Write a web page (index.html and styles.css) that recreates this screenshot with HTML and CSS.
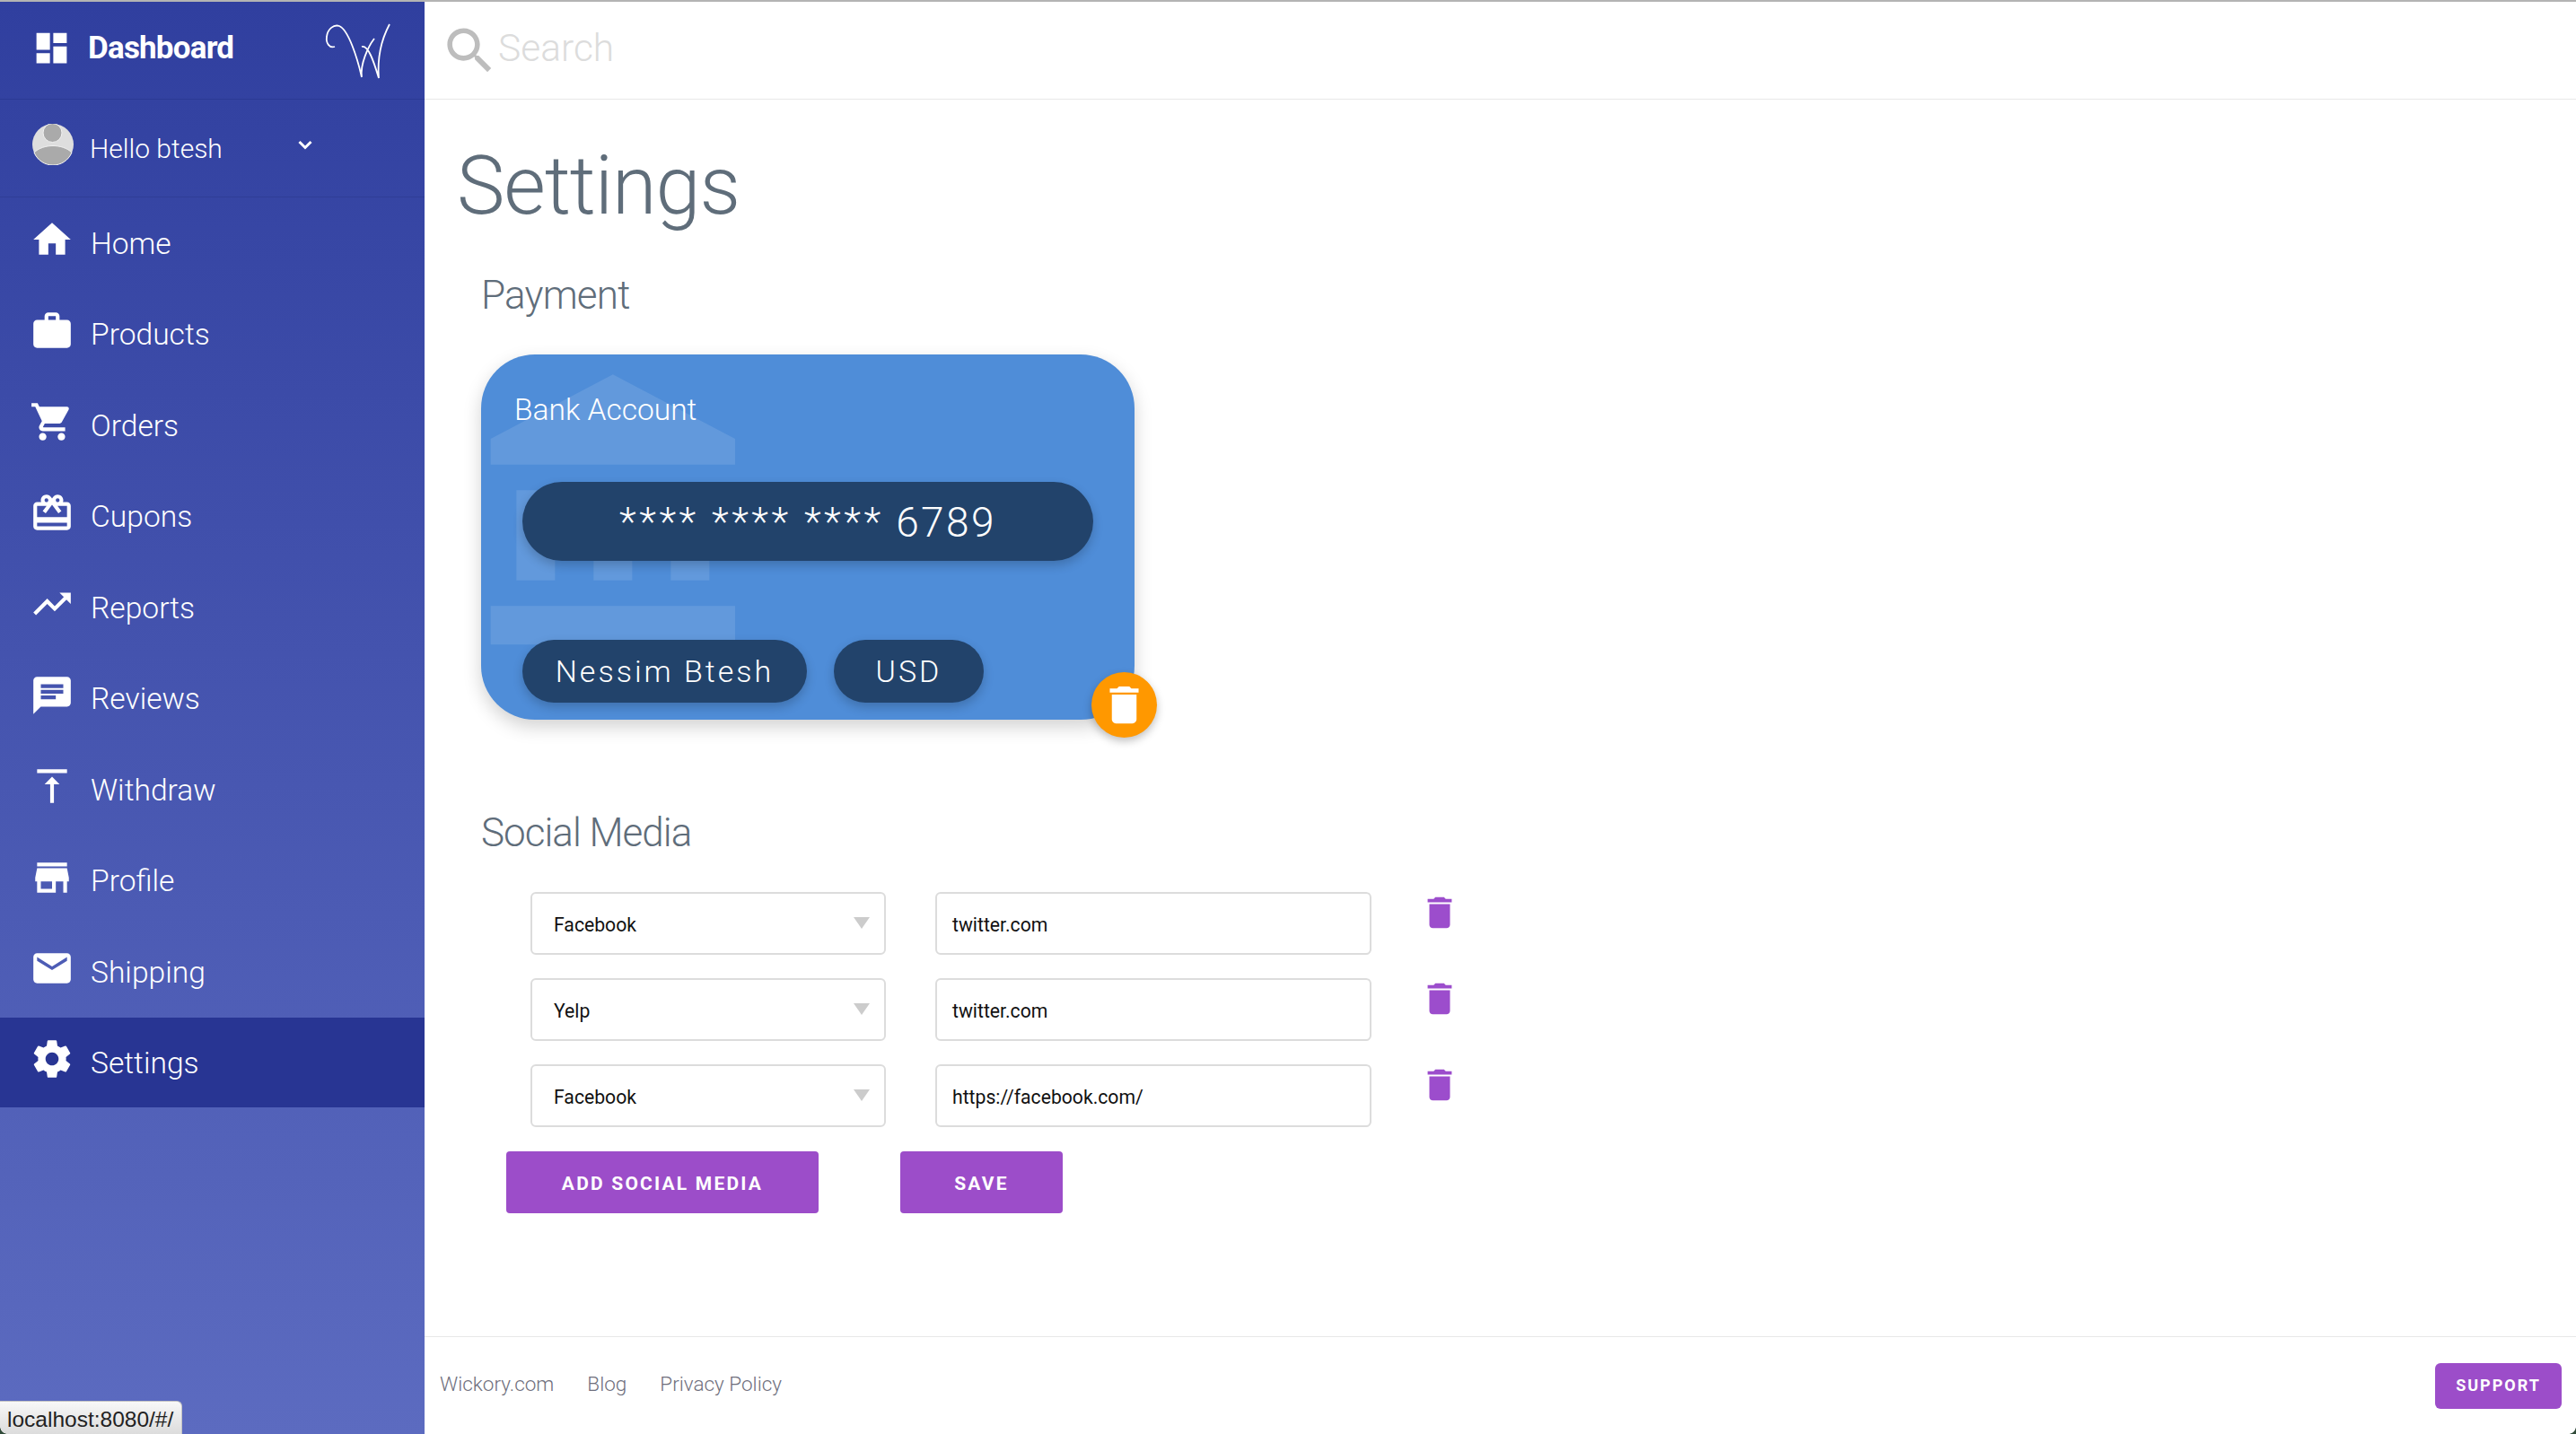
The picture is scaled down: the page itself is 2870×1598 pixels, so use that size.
FILE: index.html
```html
<!DOCTYPE html>
<html lang="en">
<head>
    <meta charset="UTF-8">
    <meta name="viewport" content="width=device-width, initial-scale=1.0">
    <title>Settings</title>
    <link rel="stylesheet" href="styles.css">
</head>
<body>
    <div class="app">
        <aside class="sidebar">
            <div class="brand">
                <svg class="brand-icon" viewBox="0 0 24 24"><path d="M3 13h8V3H3v10zm0 8h8v-6H3v6zm10 0h8V11h-8v10zm0-18v6h8V3h-8z"/></svg>
                <span class="brand-name">Dashboard</span>
                <svg class="logo" viewBox="0 0 80 70"><path d="M13 30C7 32 3 26 4 19C5 10 12 5 18 7C28 11 38 42 43 64C41 50 50 30 57 21M43 30C50 28 56 45 62 65C60 40 66 20 74 5"/></svg>
            </div>
            <div class="user">
                <svg class="avatar" viewBox="0 0 46 46">
                    <circle cx="23" cy="23" r="23" fill="#dedede"/>
                    <circle cx="22.500" cy="10" r="10.500" fill="#aaa" stroke="#f1f1f1" stroke-width="1"/>
                    <path d="M2 32C12 22 34 22 44 32C40 41 32 46 23 46C14 46 6 41 2 32z" fill="#aaa" stroke="#f1f1f1" stroke-width="1"/>
                </svg>
                <span class="user-name">Hello btesh</span>
                <svg class="chevron" viewBox="0 0 16 11"><path d="M1.500 2L8 8.500L14.500 2"/></svg>
            </div>
            <nav class="nav">
                <a class="nav-item"><svg class="nav-icon" viewBox="0 0 24 24"><path d="M10 20v-6h4v6h5v-8h3L12 3 2 12h3v8z"/></svg>Home</a>
                <a class="nav-item"><svg class="nav-icon" viewBox="0 0 24 24"><path d="M20 6h-4V4c0-1.110-.890-2-2-2h-4c-1.110 0-2 .890-2 2v2H4c-1.110 0-1.990.890-1.990 2L2 19c0 1.110.890 2 2 2h16c1.110 0 2-.890 2-2V8c0-1.110-.890-2-2-2zm-6 0h-4V4h4v2z"/></svg>Products</a>
                <a class="nav-item"><svg class="nav-icon" viewBox="0 0 24 24"><path d="M7 18c-1.100 0-1.990.900-1.990 2S5.900 22 7 22s2-.900 2-2-.900-2-2-2zM1 2v2h2l3.600 7.590-1.350 2.450c-.160.280-.250.610-.250.960 0 1.100.900 2 2 2h12v-2H7.420c-.140 0-.250-.110-.250-.250l.030-.120.900-1.630h7.450c.750 0 1.410-.410 1.750-1.030l3.580-6.490c.080-.140.120-.310.120-.480 0-.550-.450-1-1-1H5.210l-.940-2H1zm16 16c-1.100 0-1.990.900-1.990 2s.890 2 1.990 2 2-.900 2-2-.900-2-2-2z"/></svg>Orders</a>
                <a class="nav-item"><svg class="nav-icon" viewBox="0 0 24 24"><path d="M20 6h-2.180c.110-.310.180-.650.180-1 0-1.660-1.340-3-3-3-1.050 0-1.960.540-2.500 1.350l-.500.670-.500-.680C10.960 2.540 10.050 2 9 2 7.340 2 6 3.340 6 5c0 .350.070.690.180 1H4c-1.110 0-1.990.890-1.990 2L2 19c0 1.110.890 2 2 2h16c1.110 0 2-.890 2-2V8c0-1.110-.890-2-2-2zm-5-2c.550 0 1 .450 1 1s-.450 1-1 1-1-.450-1-1 .450-1 1-1zM9 4c.550 0 1 .450 1 1s-.450 1-1 1-1-.450-1-1 .450-1 1-1zm11 15H4v-2h16v2zm0-5H4V8h5.080L7 10.830 8.620 12 11 8.760l1-1.360 1 1.360L15.380 12 17 10.830 14.920 8H20v6z"/></svg>Cupons</a>
                <a class="nav-item"><svg class="nav-icon" viewBox="0 0 24 24"><path d="M16 6l2.290 2.290-4.880 4.880-4-4L2 16.590 3.410 18l6-6 4 4 6.300-6.290L22 12V6z"/></svg>Reports</a>
                <a class="nav-item"><svg class="nav-icon" viewBox="0 0 24 24"><path d="M20 2H4c-1.100 0-1.990.900-1.990 2L2 22l4-4h14c1.100 0 2-.900 2-2V4c0-1.100-.900-2-2-2zM6 9h12v2H6V9zm8 5H6v-2h8v2zm4-6H6V6h12v2z"/></svg>Reviews</a>
                <a class="nav-item"><svg class="nav-icon" viewBox="0 0 24 24"><path d="M8 11h3v10h2V11h3l-4-4-4 4zM4 3v2h16V3H4z"/></svg>Withdraw</a>
                <a class="nav-item"><svg class="nav-icon" viewBox="0 0 24 24"><path d="M20 4H4v2h16V4zm1 10v-2l-1-5H4l-1 5v2h1v6h10v-6h4v6h2v-6h1zm-9 4H6v-4h6v4z"/></svg>Profile</a>
                <a class="nav-item"><svg class="nav-icon" viewBox="0 0 24 24"><path d="M20 4H4c-1.100 0-1.990.900-1.990 2L2 18c0 1.100.900 2 2 2h16c1.100 0 2-.900 2-2V6c0-1.100-.900-2-2-2zm0 4l-8 5-8-5V6l8 5 8-5v2z"/></svg>Shipping</a>
                <a class="nav-item active"><svg class="nav-icon" viewBox="0 0 24 24"><path d="M19.430 12.980c.040-.320.070-.640.070-.980s-.030-.660-.070-.980l2.110-1.650c.190-.150.240-.420.120-.640l-2-3.460c-.120-.220-.390-.300-.610-.220l-2.490 1c-.520-.400-1.080-.730-1.690-.980l-.380-2.650C14.460 2.180 14.250 2 14 2h-4c-.250 0-.460.180-.490.420l-.380 2.650c-.610.250-1.170.590-1.690.980l-2.490-1c-.230-.090-.490 0-.610.220l-2 3.460c-.130.220-.070.490.120.640l2.110 1.650c-.040.320-.070.650-.070.980s.030.660.070.980l-2.110 1.650c-.190.150-.240.420-.12.640l2 3.460c.120.220.390.300.610.220l2.490-1c.520.400 1.080.730 1.690.980l.380 2.650c.030.240.240.420.490.420h4c.250 0 .460-.180.490-.420l.380-2.650c.610-.250 1.170-.590 1.690-.980l2.490 1c.230.090.490 0 .610-.220l2-3.460c.120-.220.070-.490-.120-.640l-2.110-1.650zM12 15.500c-1.930 0-3.500-1.570-3.500-3.500s1.570-3.500 3.500-3.500 3.500 1.570 3.500 3.500-1.570 3.500-3.500 3.500z"/></svg>Settings</a>
            </nav>
        </aside>

        <div class="main">
            <header class="topbar">
                <svg class="search-icon" viewBox="0 0 24 24"><path d="M15.500 14h-.790l-.280-.270C15.410 12.590 16 11.110 16 9.500 16 5.910 13.090 3 9.500 3S3 5.910 3 9.500 5.910 16 9.500 16c1.610 0 3.090-.590 4.230-1.570l.270.280v.790l5 4.990L20.490 19l-4.990-5zm-6 0C7.010 14 5 11.990 5 9.500S7.010 5 9.500 5 14 7.010 14 9.500 11.990 14 9.500 14z"/></svg>
                <span class="search-text">Search</span>
            </header>

            <section class="content">
                <h1 class="page-title">Settings</h1>

                <h2 class="section-title">Payment</h2>
                <div class="card">
                    <svg class="card-bank" viewBox="0 0 24 24"><path d="M4 10v7h3v-7H4zm6 0v7h3v-7h-3zM2 22h19v-3H2v3zm14-12v7h3v-7h-3zm-4.500-9L2 6v2h19V6l-9.500-5z"/></svg>
                    <div class="card-label">Bank Account</div>
                    <div class="pill pill-number"><span class="stars">**** **** ****</span> 6789</div>
                    <div class="card-bottom">
                        <div class="pill pill-small pill-name">Nessim Btesh</div>
                        <div class="pill pill-small pill-currency">USD</div>
                    </div>
                    <div class="card-delete">
                        <svg class="card-delete-icon" viewBox="0 0 24 24"><path d="M6 19c0 1.100.900 2 2 2h8c1.100 0 2-.900 2-2V7H6v12zM19 4h-3.500l-1-1h-5l-1 1H5v2h14V4z"/></svg>
                    </div>
                </div>

                <h2 class="section-title social-title">Social Media</h2>
                <div class="social-rows">
                    <div class="social-row">
                        <div class="field field-select">Facebook<i class="caret"></i></div>
                        <div class="field field-url">twitter.com</div>
                        <svg class="row-delete" viewBox="0 0 24 24"><path d="M6 19c0 1.100.900 2 2 2h8c1.100 0 2-.900 2-2V7H6v12zM19 4h-3.500l-1-1h-5l-1 1H5v2h14V4z"/></svg>
                    </div>
                    <div class="social-row">
                        <div class="field field-select">Yelp<i class="caret"></i></div>
                        <div class="field field-url">twitter.com</div>
                        <svg class="row-delete" viewBox="0 0 24 24"><path d="M6 19c0 1.100.900 2 2 2h8c1.100 0 2-.900 2-2V7H6v12zM19 4h-3.500l-1-1h-5l-1 1H5v2h14V4z"/></svg>
                    </div>
                    <div class="social-row">
                        <div class="field field-select">Facebook<i class="caret"></i></div>
                        <div class="field field-url">https://facebook.com/</div>
                        <svg class="row-delete" viewBox="0 0 24 24"><path d="M6 19c0 1.100.900 2 2 2h8c1.100 0 2-.900 2-2V7H6v12zM19 4h-3.500l-1-1h-5l-1 1H5v2h14V4z"/></svg>
                    </div>
                </div>
                <div class="social-actions">
                    <button class="btn btn-add">ADD SOCIAL MEDIA</button>
                    <button class="btn btn-save">SAVE</button>
                </div>
            </section>

            <footer class="footer">
                <a class="footer-link">Wickory.com</a>
                <a class="footer-link">Blog</a>
                <a class="footer-link">Privacy Policy</a>
                <button class="btn-support">SUPPORT</button>
            </footer>
        </div>
    </div>
    <div class="status-bubble">localhost:8080/#/</div>
    <div class="corner corner-left"></div>
    <div class="corner corner-right"></div>
</body>
</html>
```

FILE: styles.css
```css
body {
    margin: 0;
    font-family: Roboto, sans-serif;
    background: #fff;
    overflow: hidden;
}
.app {
    display: flex;
    height: 1596px;
    border-top: 2px solid #b4b4b4;
}

/* sidebar */
.sidebar {
    width: 473px;
    flex-shrink: 0;
    background: linear-gradient(180deg, #303f9f, #5c6bc0);
    color: #fff;
}
.brand {
    display: flex;
    align-items: center;
    height: 108px;
    border-bottom: 1px solid #2b3a94;
}
.brand-icon {
    width: 45px;
    height: 45px;
    margin-left: 35px;
    margin-bottom: 6px;
    fill: #fff;
}
.brand-name {
    font-size: 35px;
    font-weight: 700;
    margin-left: 18px;
    margin-bottom: 6px;
    letter-spacing: -0.8px;
}
.logo {
    width: 80px;
    height: 70px;
    margin-left: auto;
    margin-right: 33px;
    margin-top: 2px;
    fill: none;
    stroke: #fff;
    stroke-width: 1.8;
}
.user {
    display: flex;
    align-items: center;
    height: 108px;
    border-bottom: 1px solid #2f3d96;
}
.avatar {
    width: 46px;
    height: 46px;
    margin-left: 36px;
    margin-bottom: 8px;
}
.user-name {
    font-size: 30px;
    font-weight: 300;
    margin-left: 18px;
}
.chevron {
    width: 16px;
    height: 11px;
    margin-left: 84px;
    margin-bottom: 8px;
    fill: none;
    stroke: #fff;
    stroke-width: 3;
}
.nav-item {
    display: flex;
    align-items: center;
    height: 101.5px;
    font-size: 33.6px;
    font-weight: 300;
    color: #fff;
}
.nav-item:first-child {
    margin-top: 0.5px;
}
.nav-item.active {
    background: #283593;
    height: 100px;
}
.nav-icon {
    width: 50px;
    height: 50px;
    margin-left: 33px;
    margin-right: 18px;
    margin-bottom: 8px;
    fill: #fff;
}

/* main column */
.main {
    flex: 1;
    display: flex;
    flex-direction: column;
    min-width: 0;
}
.topbar {
    display: flex;
    align-items: center;
    height: 108px;
    border-bottom: 1px solid #e8e8e8;
    box-sizing: content-box;
}
.search-icon {
    width: 67px;
    height: 67px;
    margin-left: 17px;
    fill: #bdbdbd;
}
.search-text {
    font-size: 42.5px;
    font-weight: 300;
    color: #dcdcdc;
    margin-left: -2px;
    margin-bottom: 5px;
}
.content {
    flex: 1;
}
.page-title {
    margin: 35px 0 0 36px;
    font-size: 90px;
    line-height: 124px;
    font-weight: 300;
    letter-spacing: -1px;
    color: #5f6d7a;
}
.section-title {
    margin: 29px 0 0 63px;
    font-size: 44px;
    line-height: 60px;
    font-weight: 300;
    letter-spacing: -0.8px;
    color: #5f6d7a;
}

/* payment card */
.card {
    position: relative;
    box-sizing: border-box;
    width: 728px;
    height: 407px;
    margin: 36px 0 0 63px;
    padding: 0 46px;
    border-radius: 60px;
    background: #4f8dd8;
    box-shadow: 0 8px 20px rgba(0, 0, 0, 0.18);
    color: #fff;
}
.card-bank {
    position: absolute;
    left: -18px;
    top: 8px;
    width: 344px;
    height: 344px;
    fill: rgba(255, 255, 255, 0.11);
}
.card-label {
    position: relative;
    margin-left: -9px;
    padding-top: 38px;
    font-size: 33.5px;
    line-height: 48px;
    font-weight: 300;
}
.pill {
    position: relative;
    display: flex;
    align-items: center;
    justify-content: center;
    background: #22436b;
    box-shadow: 0 5px 12px rgba(0, 0, 0, 0.2);
}
.pill-number {
    box-sizing: border-box;
    height: 88px;
    margin-top: 56px;
    padding-top: 2px;
    border-radius: 44px;
    font-size: 46px;
    font-weight: 300;
    letter-spacing: 2.4px;
    white-space: pre;
}
.stars {
    font-size: 44px;
    letter-spacing: 3.5px;
}
.card-bottom {
    display: flex;
    gap: 30px;
    margin-top: 88px;
}
.pill-small {
    height: 70px;
    border-radius: 35px;
    font-size: 34px;
    font-weight: 300;
    letter-spacing: 3px;
}
.pill-name {
    width: 317px;
}
.pill-currency {
    width: 167px;
}
.card-delete {
    position: absolute;
    right: -25px;
    bottom: -20px;
    display: flex;
    align-items: center;
    justify-content: center;
    width: 73px;
    height: 73px;
    border-radius: 50%;
    background: #ff9800;
    box-shadow: 0 4px 10px rgba(0, 0, 0, 0.25);
}
.card-delete-icon {
    width: 55px;
    height: 55px;
    fill: #fff;
}

/* social media */
.social-title {
    margin-top: 96px;
    letter-spacing: -1px;
}
.social-rows {
    display: flex;
    flex-direction: column;
    gap: 27px;
    margin: 36px 0 0 118px;
}
.social-row {
    display: flex;
    align-items: flex-start;
}
.field {
    box-sizing: border-box;
    display: flex;
    align-items: center;
    position: relative;
    height: 70px;
    padding-top: 2px;
    margin-bottom: -1px;
    border: 2px solid #dcdcdc;
    border-radius: 6px;
    font-size: 21.2px;
    color: #111;
}
.field-select {
    width: 396px;
    padding-left: 24px;
}
.field-url {
    width: 486px;
    margin-left: 55px;
    padding-left: 17px;
}
.caret {
    position: absolute;
    right: 16px;
    top: 26px;
    border-left: 9px solid transparent;
    border-right: 9px solid transparent;
    border-top: 13px solid #ccc;
}
.row-delete {
    width: 46px;
    height: 46px;
    margin-left: 53px;
    fill: #9c4dcc;
}
.social-actions {
    display: flex;
    gap: 91px;
    margin: 28px 0 0 91px;
}
.btn {
    height: 69px;
    border: none;
    border-radius: 4px;
    background: #9c4dc9;
    color: #fff;
    font-family: Roboto, sans-serif;
    font-size: 21px;
    font-weight: 700;
    letter-spacing: 2.2px;
    padding: 3px 0 0;
}
.btn-add {
    width: 348px;
}
.btn-save {
    width: 181px;
}

/* footer */
.footer {
    display: flex;
    align-items: center;
    gap: 37px;
    height: 108px;
    padding-left: 17px;
    border-top: 1px solid #e8e8e8;
}
.footer-link {
    font-size: 22.5px;
    font-weight: 300;
    color: #6f6f7d;
    margin-bottom: 5px;
}
.btn-support {
    width: 141px;
    height: 51px;
    margin-left: auto;
    margin-right: 16px;
    border: none;
    border-radius: 6px;
    background: #9c4dc9;
    color: #fff;
    font-family: Roboto, sans-serif;
    font-size: 18px;
    font-weight: 700;
    letter-spacing: 2px;
    padding: 0 0 2px;
}

/* browser link preview */
.status-bubble {
    position: absolute;
    left: 0;
    bottom: 0;
    box-sizing: border-box;
    width: 203px;
    height: 37px;
    padding: 6px 0 0 8px;
    border-top: 1px solid #c4c4c4;
    border-right: 1px solid #c4c4c4;
    border-top-right-radius: 6px;
    background: linear-gradient(180deg, #f8f8f8, #dcdcdc);
    font-family: "Liberation Sans", sans-serif;
    font-size: 24.5px;
    line-height: 28px;
    color: #222;
    white-space: nowrap;
}

/* rounded window corners */
.corner {
    position: absolute;
    bottom: 0;
    width: 8px;
    height: 8px;
}
.corner-left {
    left: 0;
    background: radial-gradient(circle at 100% 0, transparent 7.5px, #2f4a38 8px);
}
.corner-right {
    right: 0;
    background: radial-gradient(circle at 0 0, transparent 7.5px, #2f4a38 8px);
}
```
